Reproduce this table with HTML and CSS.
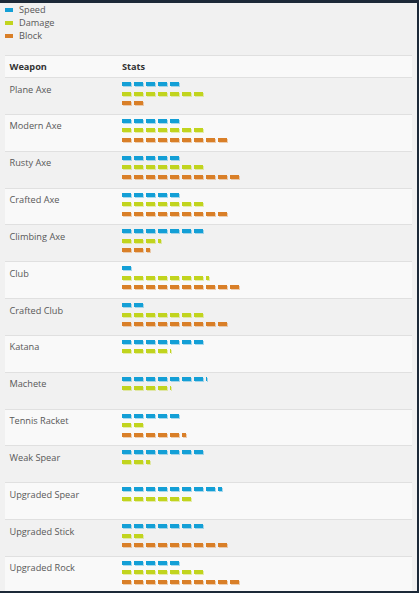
FILE: index.html
```html
<!DOCTYPE html>
<html>
<head>
<meta charset="utf-8">
<link rel="stylesheet" href="styles.css">
</head>
<body>
<div class="panel">
  <div class="legend">
    <div class="legend-item"><span class="sw blue"></span>Speed</div>
    <div class="legend-item"><span class="sw green"></span>Damage</div>
    <div class="legend-item"><span class="sw orange"></span>Block</div>
  </div>
  <div class="table">
    <div class="row head"><div class="name">Weapon</div><div class="stats-h">Stats</div></div>

    <div class="row odd"><div class="name">Plane Axe</div><div class="stats">
      <div class="bar blue"><i></i><i></i><i></i><i></i><i></i></div>
      <div class="bar green"><i></i><i></i><i></i><i></i><i></i><i></i><i></i></div>
      <div class="bar orange"><i></i><i></i></div>
    </div></div>

    <div class="row even"><div class="name">Modern Axe</div><div class="stats">
      <div class="bar blue"><i></i><i></i><i></i><i></i><i></i></div>
      <div class="bar green"><i></i><i></i><i></i><i></i><i></i><i></i><i></i></div>
      <div class="bar orange"><i></i><i></i><i></i><i></i><i></i><i></i><i></i><i></i><i></i></div>
    </div></div>

    <div class="row odd"><div class="name">Rusty Axe</div><div class="stats">
      <div class="bar blue"><i></i><i></i><i></i><i></i><i></i></div>
      <div class="bar green"><i></i><i></i><i></i><i></i><i></i><i></i><i></i></div>
      <div class="bar orange"><i></i><i></i><i></i><i></i><i></i><i></i><i></i><i></i><i></i><i></i></div>
    </div></div>

    <div class="row even"><div class="name">Crafted Axe</div><div class="stats">
      <div class="bar blue"><i></i><i></i><i></i><i></i><i></i></div>
      <div class="bar green"><i></i><i></i><i></i><i></i><i></i><i></i><i></i></div>
      <div class="bar orange"><i></i><i></i><i></i><i></i><i></i><i></i><i></i><i></i><i></i></div>
    </div></div>

    <div class="row odd"><div class="name">Climbing Axe</div><div class="stats">
      <div class="bar blue"><i></i><i></i><i></i><i></i><i></i><i></i><i></i></div>
      <div class="bar green"><i></i><i></i><i></i><i style="width:3px"></i></div>
      <div class="bar orange"><i></i><i></i><i style="width:4px"></i></div>
    </div></div>

    <div class="row even"><div class="name">Club</div><div class="stats">
      <div class="bar blue"><i></i></div>
      <div class="bar green"><i></i><i></i><i></i><i></i><i></i><i></i><i></i><i style="width:3px"></i></div>
      <div class="bar orange"><i></i><i></i><i></i><i></i><i></i><i></i><i></i><i></i><i></i><i></i></div>
    </div></div>

    <div class="row odd"><div class="name">Crafted Club</div><div class="stats">
      <div class="bar blue"><i></i><i></i></div>
      <div class="bar green"><i></i><i></i><i></i><i></i><i></i><i></i><i></i></div>
      <div class="bar orange"><i></i><i></i><i></i><i></i><i></i><i></i><i></i><i></i><i></i></div>
    </div></div>

    <div class="row even"><div class="name">Katana</div><div class="stats">
      <div class="bar blue"><i></i><i></i><i></i><i></i><i></i><i></i><i></i></div>
      <div class="bar green"><i></i><i></i><i></i><i></i><i style="width:1px"></i></div>
    </div></div>

    <div class="row odd"><div class="name">Machete</div><div class="stats">
      <div class="bar blue"><i></i><i></i><i></i><i></i><i></i><i></i><i></i><i style="width:1px"></i></div>
      <div class="bar green"><i></i><i></i><i></i><i></i><i style="width:1px"></i></div>
    </div></div>

    <div class="row even"><div class="name">Tennis Racket</div><div class="stats">
      <div class="bar blue"><i></i><i></i><i></i><i></i><i></i></div>
      <div class="bar green"><i></i><i></i></div>
      <div class="bar orange"><i></i><i></i><i></i><i></i><i></i><i style="width:4px"></i></div>
    </div></div>

    <div class="row odd"><div class="name">Weak Spear</div><div class="stats">
      <div class="bar blue"><i></i><i></i><i></i><i></i><i></i><i></i><i></i></div>
      <div class="bar green"><i></i><i></i><i style="width:4px"></i></div>
    </div></div>

    <div class="row even"><div class="name">Upgraded Spear</div><div class="stats">
      <div class="bar blue"><i></i><i></i><i></i><i></i><i></i><i></i><i></i><i></i><i style="width:4px"></i></div>
      <div class="bar green"><i></i><i></i><i></i><i></i><i></i><i></i></div>
    </div></div>

    <div class="row odd"><div class="name">Upgraded Stick</div><div class="stats">
      <div class="bar blue"><i></i><i></i><i></i><i></i><i></i><i></i><i></i></div>
      <div class="bar green"><i></i><i></i></div>
      <div class="bar orange"><i></i><i></i><i></i><i></i><i></i><i></i><i></i><i></i><i></i></div>
    </div></div>

    <div class="row even"><div class="name">Upgraded Rock</div><div class="stats">
      <div class="bar blue"><i></i><i></i><i></i><i></i><i></i></div>
      <div class="bar green"><i></i><i></i><i></i><i></i><i></i><i></i><i></i></div>
      <div class="bar orange"><i></i><i></i><i></i><i></i><i></i><i></i><i></i><i></i><i></i><i></i></div>
    </div></div>
  </div>
</div>
</body>
</html>
```

FILE: styles.css
```css
html, body {
  margin: 0;
  padding: 0;
  background: #1c2938;
  height: 593px;
  overflow: hidden;
}

.panel {
  margin-top: 3px;
  width: 417px;
  height: 588px;
  background: #f1f1f1;
  overflow: hidden;
  font-family: "Open Sans", "Liberation Sans", sans-serif;
  font-size: 9.2px;
  color: #585858;
}

.legend {
  padding-left: 5px;
  margin-bottom: 13px;
}

.legend-item {
  display: flex;
  align-items: center;
  height: 13px;
  line-height: 13px;
}

.sw {
  display: inline-block;
  width: 8px;
  height: 4px;
  margin-right: 6px;
}

.sw.blue { background: #139fd6; }
.sw.green { background: #c1d41e; }
.sw.orange { background: #d97f28; }

.table {
  margin: 0 5px;
  border-top: 1px solid #e0e0e0;
}

.row {
  display: flex;
  border-top: 1px solid #e0e0e0;
  height: 35.85px;
}

.row.head {
  border-top: none;
  height: 21px;
  background: #f9f9f9;
  align-items: center;
  font-weight: bold;
  color: #333;
}

.row.odd { background: #f1f1f1; }
.row.even { background: #f9f9f9; }

.name {
  width: 112.5px;
  padding-left: 4.5px;
  padding-top: 4.5px;
  line-height: 13px;
}

.head .name { padding-top: 0; }

.stats {
  padding-top: 4px;
  display: flex;
  flex-direction: column;
}

.bar {
  display: flex;
  gap: 3px;
  height: 9.5px;
}

.bar i {
  display: block;
  width: 9px;
  height: 4px;
}

.bar.blue i { background: #139fd6; box-shadow: 1px 1px 0 rgba(19, 159, 214, 0.35); }
.bar.green i { background: #c1d41e; box-shadow: 1px 1px 0 rgba(193, 212, 30, 0.35); }
.bar.orange i { background: #d97f28; box-shadow: 1px 1px 0 rgba(217, 127, 40, 0.35); }
```
